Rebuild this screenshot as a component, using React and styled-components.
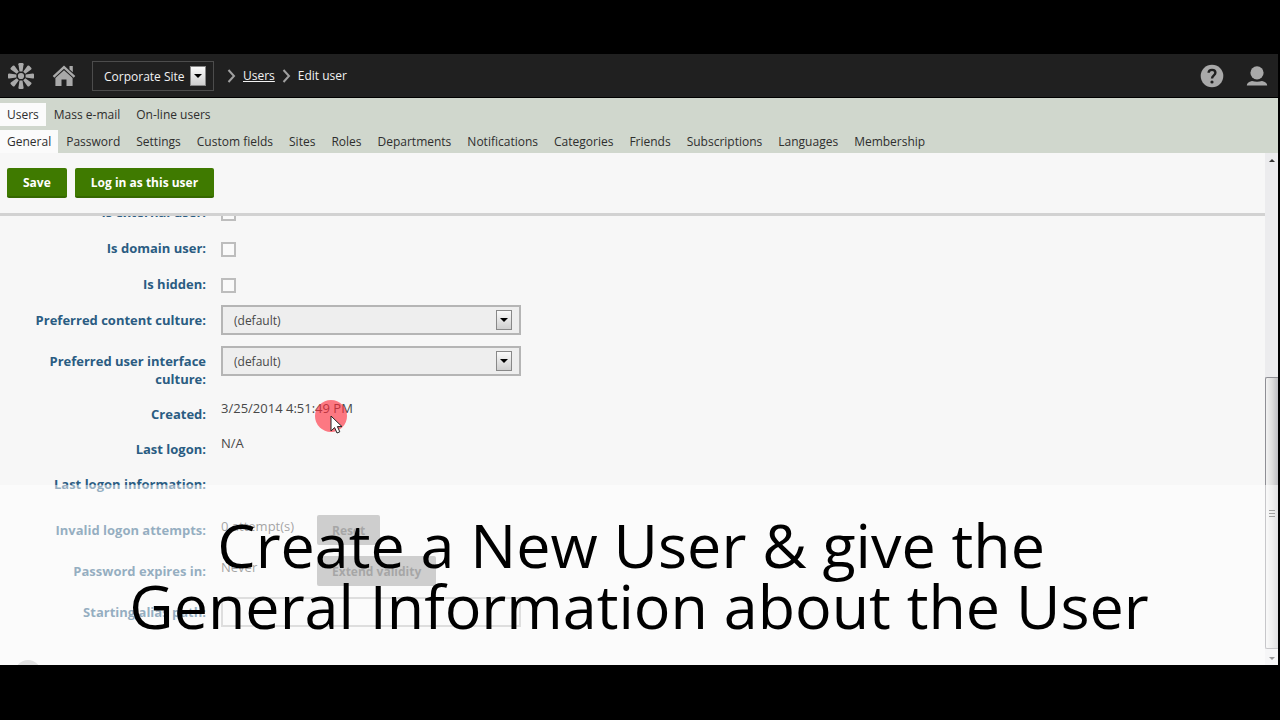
import React from "react";
import styled, { createGlobalStyle } from "styled-components";

const GlobalStyle = createGlobalStyle`
  :root {
    --ui-font: "Open Sans", "Noto Sans", sans-serif;
    --page: #f7f7f7;
    --label: #2a5c82;
    --text: #484848;
    --green: #3f7a00;
    --icon: #a9a9a9;
    --fs-ui: 12px;
    --fs-label: 13px;
  }

  * {
    box-sizing: border-box;
  }

  body {
    margin: 0;
    background: #000;
    font-family: var(--ui-font);
    font-size: var(--fs-ui);
    color: var(--text);
  }

  button,
  input,
  select {
    font-family: inherit;
    font-size: inherit;
  }
`;

const Screen = styled.div`
  display: flex;
  flex-direction: column;
  height: 100vh;
  padding: 54px 2px 55px 0;
`;

const Frame = styled.main`
  position: relative;
  display: flex;
  flex-direction: column;
  flex: 1;
  min-height: 0;
  overflow: hidden;
  background: var(--page);
`;

const Header = styled.header`
  display: flex;
  align-items: center;
  flex-shrink: 0;
  height: 44px;
  padding: 0 10px 0 7px;
  background: #202020;
  border-bottom: 1px solid #000;
  color: #f2f2f2;
`;

const IconLink = styled.a`
  display: flex;
  margin-right: ${({ $gap }) => $gap || "0"};
  color: var(--icon);
`;

const SitePicker = styled.div`
  position: relative;
  display: flex;
  width: 122px;
  height: 30px;
  margin-right: 13px;
  border: 1px solid #4c4c4c;
`;

const SiteSelect = styled.select`
  appearance: none;
  width: 100%;
  padding: 2px 0 0 11px;
  border: 0;
  background: transparent;
  color: inherit;
`;

const ArrowBox = styled.span`
  position: absolute;
  top: 50%;
  right: ${({ $inset }) => $inset || "7px"};
  display: flex;
  align-items: center;
  justify-content: center;
  width: 16px;
  height: 20px;
  transform: translateY(-50%);
  border: 1px solid #888;
  background: linear-gradient(#fafafa, #cfcfcf);
  pointer-events: none;

  &::before {
    content: "";
    border: 4px solid transparent;
    border-top-color: #000;
    border-bottom: 0;
  }
`;

const Crumbs = styled.nav`
  display: flex;
  align-items: center;
  gap: 7px;
  flex: 1;
`;

const CrumbLink = styled.a`
  color: inherit;
`;

const Tabs = styled.nav`
  flex-shrink: 0;
  padding-top: 5px;
  background: #d0d7cd;
`;

const TabRow = styled.div`
  display: flex;
  margin-bottom: ${({ $last }) => ($last ? "0" : "4px")};
`;

const Tab = styled.a`
  padding: 0 8px;
  line-height: 23px;
  color: #2e2e2e;
  text-decoration: none;

  &:first-child {
    padding: 0 7px;
    background: #fbfbfb;
  }
`;

const Toolbar = styled.div`
  display: flex;
  gap: 8px;
  flex-shrink: 0;
  padding: 15px 7px;
  border-bottom: 3px solid #d2d2d2;
`;

const GreenButton = styled.button`
  height: 30px;
  padding: 0 16px;
  border: 0;
  border-bottom: 2px solid #356800;
  border-radius: 2px;
  background: var(--green);
  color: #fff;
  font-weight: 700;
`;

const Body = styled.div`
  display: flex;
  flex: 1;
  min-height: 0;
`;

const Pane = styled.div`
  flex: 1;
  overflow: hidden;
`;

// the pane is scrolled, so the first row starts above its edge
const Form = styled.form`
  display: flex;
  flex-direction: column;
  gap: 11px;
  margin-top: -19px;
  padding-left: 28px;
`;

const Row = styled.div`
  display: flex;
  align-items: flex-start;
  gap: 15px;
  min-height: ${({ $height }) => $height || "24px"};
`;

const Label = styled.label`
  width: 178px;
  padding-top: 6px;
  color: var(--label);
  font-size: var(--fs-label);
  font-weight: 700;
  line-height: 18px;
  text-align: right;
`;

const Value = styled.span`
  min-width: ${({ $narrow }) => ($narrow ? "81px" : "0")};
  padding-top: ${({ $narrow }) => ($narrow ? "2px" : "0")};
  font-size: var(--fs-label);
  line-height: 18px;
`;

const Check = styled.input`
  appearance: none;
  width: 15px;
  height: 15px;
  margin: 9px 0 0;
  border: 2px solid #bdbdbd;
  background: #fafafa;
`;

const SelectBox = styled.div`
  position: relative;
  width: 300px;
`;

const Select = styled.select`
  appearance: none;
  width: 100%;
  height: 30px;
  padding: 0 11px;
  border: 2px solid #b5b5b5;
  background: #eee;
  color: inherit;
`;

const TextInput = styled.input`
  width: 300px;
  height: 30px;
  border: 2px solid #bdbdbd;
  background: #f7f7f7;
`;

const GreyButton = styled.button`
  height: 30px;
  padding: 0 15px;
  border: 0;
  border-radius: 2px;
  background: #9c9c9c;
  color: #4c4c4c;
  font-weight: 700;
`;

const HelpDot = styled.span`
  width: 26px;
  height: 26px;
  margin: 22px 0 0 -13px;
  border-radius: 50%;
  background: #c4c4c4;
`;

const ScrollTrack = styled.div`
  display: flex;
  flex-direction: column;
  align-items: center;
  width: 13px;
  margin-top: -63px;
  padding: 6px 0 5px;
  background: #ececee;
`;

const ScrollArrow = styled.span`
  border: 3px solid transparent;
  border-${({ $down }) => ($down ? "top" : "bottom")}-color: #333;
  border-${({ $down }) => ($down ? "bottom" : "top")}: 0;
`;

const ScrollThumb = styled.div`
  display: flex;
  flex-direction: column;
  align-items: center;
  justify-content: center;
  gap: 2px;
  width: 13px;
  height: 272px;
  margin: auto 0 8px;
  border: 1px solid #8f8f95;
  border-right: 0;
  border-radius: 2px 0 0 2px;
  background: linear-gradient(90deg, #f3f3f3, #dedede 50%, #bfbfc3);

  span {
    width: 6px;
    height: 1px;
    background: #444;
  }
`;

const Caption = styled.p`
  position: absolute;
  right: 0;
  bottom: 0;
  left: 0;
  height: 180px;
  margin: 0;
  padding-top: 29px;
  background: rgba(255, 255, 255, 0.5);
  color: #000;
  font-size: 61px;
  line-height: 61px;
  text-align: center;
`;

const Cursor = styled.svg`
  position: absolute;
  top: 346px;
  left: 315px;
`;

const Logo = () => (
  <svg width="28" height="28" viewBox="-14 -14 28 28" fill="currentColor">
    {[0, 45, 90, 135, 180, 225, 270, 315].map((angle) => (
      <path
        key={angle}
        d="M-1.5 -4.6 L-2.6 -11.8 Q-2.6 -13 -1.4 -13 H1.4 Q2.6 -13 2.6 -11.8 L1.5 -4.6Z"
        transform={`rotate(${angle})`}
      />
    ))}
    <circle r="3.1" />
  </svg>
);

const Home = () => (
  <svg width="24" height="24" viewBox="0 0 24 24" fill="currentColor">
    <path d="M12 1.5 L23.3 12 L21.7 13.7 L12 4.7 L2.3 13.7 L0.7 12Z" />
    <path d="M17.5 2 H20.8 V8.2 L17.5 5.2Z" />
    <path d="M12 6.2 L20.6 14 V22 H14.5 V15.5 H9.5 V22 H3.4 V14Z" />
  </svg>
);

const Chevron = () => (
  <svg width="9" height="14" viewBox="0 0 9 14" fill="none" stroke="#a0a0a0" strokeWidth="2">
    <path d="M1.5 1 L7 7 L1.5 13" />
  </svg>
);

const Help = () => (
  <svg width="24" height="24" viewBox="0 0 24 24">
    <circle cx="12" cy="12" r="11.3" fill="#a9a9a9" />
    <path
      d="M8.6 8.8 C8.8 4.8 15.4 4.9 15.4 8.8 C15.4 11.4 12 11.4 12 14.6"
      fill="none"
      stroke="#202020"
      strokeWidth="2.4"
    />
    <circle cx="12" cy="18" r="1.6" fill="#202020" />
  </svg>
);

const Person = () => (
  <svg width="22" height="20" viewBox="0 0 22 20" fill="currentColor">
    <ellipse cx="11" cy="6.8" rx="6.6" ry="6.6" />
    <path d="M0.8 19.5 Q0.8 16 6 15 Q11 16.4 16 15 Q21.2 16 21.2 19.5Z" />
  </svg>
);

const sections = ["Users", "Mass e-mail", "On-line users"];

const pages = [
  "General",
  "Password",
  "Settings",
  "Custom fields",
  "Sites",
  "Roles",
  "Departments",
  "Notifications",
  "Categories",
  "Friends",
  "Subscriptions",
  "Languages",
  "Membership",
];

const checks = [
  { id: "external", label: "Is external user:" },
  { id: "domain", label: "Is domain user:" },
  { id: "hidden", label: "Is hidden:" },
];

const cultures = [
  { id: "content-culture", label: "Preferred content culture:" },
  { id: "ui-culture", label: "Preferred user interface culture:" },
];

const TabList = ({ items, last }) => (
  <TabRow $last={last}>
    {items.map((item) => (
      <Tab key={item} href="#">
        {item}
      </Tab>
    ))}
  </TabRow>
);

const App = () => {
  return (
    <Screen>
      <GlobalStyle />
      <Frame>
        <Header>
          <IconLink href="#" $gap="17px" aria-label="Dashboard">
            <Logo />
          </IconLink>
          <IconLink href="#" $gap="16px" aria-label="Home">
            <Home />
          </IconLink>
          <SitePicker>
            <SiteSelect aria-label="Site">
              <option>Corporate Site</option>
            </SiteSelect>
            <ArrowBox />
          </SitePicker>
          <Crumbs>
            <Chevron />
            <CrumbLink href="#">Users</CrumbLink>
            <Chevron />
            <span>Edit user</span>
          </Crumbs>
          <IconLink href="#" $gap="22px" aria-label="Help">
            <Help />
          </IconLink>
          <IconLink href="#" aria-label="Profile">
            <Person />
          </IconLink>
        </Header>
        <Tabs>
          <TabList items={sections} />
          <TabList items={pages} last />
        </Tabs>
        <Toolbar>
          <GreenButton>Save</GreenButton>
          <GreenButton>Log in as this user</GreenButton>
        </Toolbar>
        <Body>
          <Pane>
            <Form>
              {checks.map(({ id, label }) => (
                <Row key={id} $height="25px">
                  <Label htmlFor={id}>{label}</Label>
                  <Check type="checkbox" id={id} />
                </Row>
              ))}
              {cultures.map(({ id, label }) => (
                <Row key={id} $height="30px">
                  <Label htmlFor={id}>{label}</Label>
                  <SelectBox>
                    <Select id={id}>
                      <option>(default)</option>
                    </Select>
                    <ArrowBox $inset="9px" />
                  </SelectBox>
                </Row>
              ))}
              <Row>
                <Label as="span">Created:</Label>
                <Value>3/25/2014 4:51:49 PM</Value>
              </Row>
              <Row>
                <Label as="span">Last logon:</Label>
                <Value>N/A</Value>
              </Row>
              <Row $height="35px">
                <Label as="span">Last logon information:</Label>
              </Row>
              <Row $height="30px">
                <Label as="span">Invalid logon attempts:</Label>
                <Value $narrow>0 attempt(s)</Value>
                <GreyButton type="button">Reset</GreyButton>
              </Row>
              <Row $height="30px">
                <Label as="span">Password expires in:</Label>
                <Value $narrow>Never</Value>
                <GreyButton type="button">Extend validity</GreyButton>
              </Row>
              <Row $height="30px">
                <Label htmlFor="alias">Starting alias path:</Label>
                <TextInput id="alias" />
              </Row>
              <HelpDot />
            </Form>
          </Pane>
          <ScrollTrack>
            <ScrollArrow />
            <ScrollThumb>
              <span />
              <span />
              <span />
            </ScrollThumb>
            <ScrollArrow $down />
          </ScrollTrack>
        </Body>
        <Cursor width="34" height="36" viewBox="0 0 34 36">
          <circle cx="16" cy="16" r="16" fill="#ff2a3a" fillOpacity="0.62" />
          <path
            d="M16 16 V31 L19.6 27.6 L22 33 L24.8 31.8 L22.4 26.6 H27Z"
            fill="#fff"
            stroke="#222"
            strokeWidth="1"
          />
        </Cursor>
        <Caption>
          Create a New User &amp; give the&nbsp;
          <br />
          General Information about the User
        </Caption>
      </Frame>
    </Screen>
  );
};

export default App;
